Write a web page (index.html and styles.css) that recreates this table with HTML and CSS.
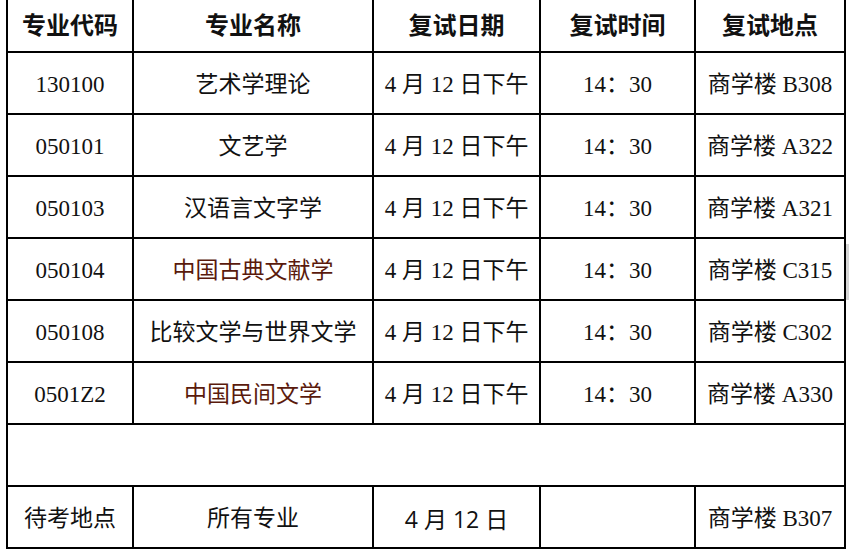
FILE: index.html
```html
<!DOCTYPE html>
<html lang="zh-CN">
<head>
<meta charset="utf-8">
<title>复试安排</title>
<link rel="stylesheet" href="styles.css">
</head>
<body>
<table class="sched">
  <colgroup>
    <col class="c1"><col class="c2"><col class="c3"><col class="c4"><col class="c5">
  </colgroup>
  <thead>
    <tr class="head">
      <th>专业代码</th><th>专业名称</th><th>复试日期</th><th>复试时间</th><th>复试地点</th>
    </tr>
  </thead>
  <tbody>
    <tr><td class="num">130100</td><td>艺术学理论</td><td>4 月 12 日下午</td><td>14：30</td><td>商学楼 B308</td></tr>
    <tr><td class="num">050101</td><td>文艺学</td><td>4 月 12 日下午</td><td>14：30</td><td>商学楼 A322</td></tr>
    <tr><td class="num">050103</td><td>汉语言文字学</td><td>4 月 12 日下午</td><td>14：30</td><td>商学楼 A321</td></tr>
    <tr><td class="num">050104</td><td class="red">中国古典文献学</td><td>4 月 12 日下午</td><td>14：30</td><td>商学楼 C315</td></tr>
    <tr><td class="num">050108</td><td>比较文学与世界文学</td><td>4 月 12 日下午</td><td>14：30</td><td>商学楼 C302</td></tr>
    <tr><td class="num">0501Z2</td><td class="red">中国民间文学</td><td>4 月 12 日下午</td><td>14：30</td><td>商学楼 A330</td></tr>
    <tr class="blank"><td colspan="5"></td></tr>
    <tr><td>待考地点</td><td>所有专业</td><td class="sans">4 月 12 日</td><td></td><td>商学楼 B307</td></tr>
  </tbody>
</table>
<div class="edge"></div>
</body>
</html>
```
FILE: styles.css
```css
html, body {
  margin: 0;
  padding: 0;
  background: #ffffff;
}
body {
  position: relative;
  width: 850px;
  height: 550px;
  overflow: hidden;
  font-family: "Liberation Serif", "Noto Sans CJK SC", serif;
  color: #111111;
}
.sched {
  margin-left: 6px;
  border-collapse: collapse;
  table-layout: fixed;
  width: 838px;
}
.c1 { width: 126px; }
.c2 { width: 240px; }
.c3 { width: 167px; }
.c4 { width: 155px; }
.c5 { width: 150px; }
.sched th,
.sched td {
  border: 2px solid #000000;
  text-align: center;
  vertical-align: middle;
  padding: 0;
  font-size: 23px;
  line-height: 28px;
  font-weight: normal;
  white-space: nowrap;
}
.sched th {
  border-top: none;
  font-weight: bold;
  font-size: 24px;
  height: 47px;
  padding-bottom: 4px;
  font-family: "Noto Sans CJK SC", sans-serif;
}
.sched td.num {
  font-size: 23px;
}
.sched td {
  height: 62px;
  padding-top: 3px;
  box-sizing: border-box;
}
.red {
  color: #5a1a0c;
}
.sans {
  font-family: "Open Sans", "Noto Sans CJK SC", sans-serif;
  font-weight: 500;
}
.edge {
  position: absolute;
  left: 846px;
  top: 244px;
  width: 3px;
  height: 56px;
  background: #d6d6d6;
}
```
